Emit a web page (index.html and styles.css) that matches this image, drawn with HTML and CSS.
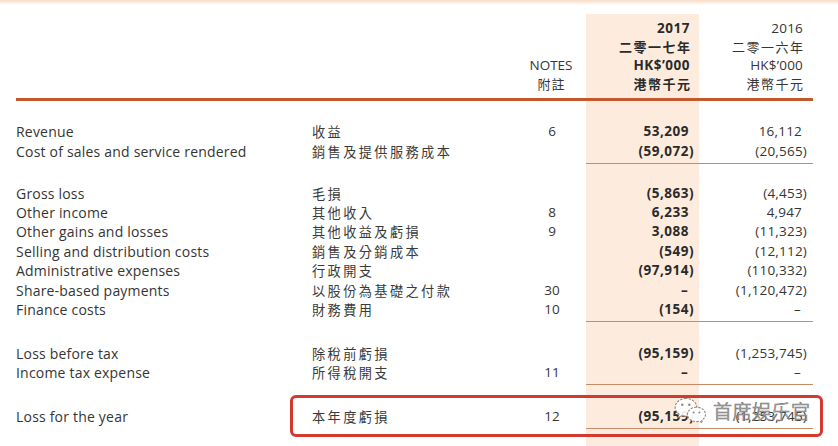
FILE: index.html
```html
<!DOCTYPE html>
<html lang="en">
<head>
<meta charset="utf-8">
<title>Consolidated statement of profit or loss</title>
<link rel="stylesheet" href="styles.css">
</head>
<body>
<div class="sheet">
  <div class="topband"></div>
  <div class="stmt">
    <div class="row head">
      <div class="en"></div>
      <div class="zh"></div>
      <div class="note">NOTES<br><span class="zhh">附註</span></div>
      <div class="sp"></div>
      <div class="cur">2017<br><span class="zhh">二零一七年</span><br>HK$’000<br><span class="zhh">港幣千元</span></div>
      <div class="prev">2016<br><span class="zhh">二零一六年</span><br>HK$’000<br><span class="zhh">港幣千元</span></div>
    </div>
    <div class="hrule"></div>

    <div class="row gap g21"><div></div><div></div><div></div><div></div><div class="cur"></div><div></div></div>

    <div class="row"><div class="en">Revenue</div><div class="zh">收益</div><div class="note">6</div><div class="sp"></div><div class="cur"><span class="pos">53,209</span></div><div class="prev"><span class="pos">16,112</span></div></div>
    <div class="row sum"><div class="en">Cost of sales and service rendered</div><div class="zh">銷售及提供服務成本</div><div class="note"></div><div class="sp"></div><div class="cur">(59,072)</div><div class="prev">(20,565)</div></div>

    <div class="row gap g20"><div></div><div></div><div></div><div></div><div class="cur"></div><div></div></div>

    <div class="row"><div class="en">Gross loss</div><div class="zh">毛損</div><div class="note"></div><div class="sp"></div><div class="cur">(5,863)</div><div class="prev">(4,453)</div></div>
    <div class="row"><div class="en">Other income</div><div class="zh">其他收入</div><div class="note">8</div><div class="sp"></div><div class="cur"><span class="pos">6,233</span></div><div class="prev"><span class="pos">4,947</span></div></div>
    <div class="row"><div class="en">Other gains and losses</div><div class="zh">其他收益及虧損</div><div class="note">9</div><div class="sp"></div><div class="cur"><span class="pos">3,088</span></div><div class="prev">(11,323)</div></div>
    <div class="row"><div class="en">Selling and distribution costs</div><div class="zh">銷售及分銷成本</div><div class="note"></div><div class="sp"></div><div class="cur">(549)</div><div class="prev">(12,112)</div></div>
    <div class="row"><div class="en">Administrative expenses</div><div class="zh">行政開支</div><div class="note"></div><div class="sp"></div><div class="cur">(97,914)</div><div class="prev">(110,332)</div></div>
    <div class="row"><div class="en">Share-based payments</div><div class="zh">以股份為基礎之付款</div><div class="note">30</div><div class="sp"></div><div class="cur"><span class="dash">–</span></div><div class="prev">(1,120,472)</div></div>
    <div class="row sum"><div class="en">Finance costs</div><div class="zh">財務費用</div><div class="note">10</div><div class="sp"></div><div class="cur">(154)</div><div class="prev"><span class="dash">–</span></div></div>

    <div class="row gap g22"><div></div><div></div><div></div><div></div><div class="cur"></div><div></div></div>

    <div class="row"><div class="en">Loss before tax</div><div class="zh">除稅前虧損</div><div class="note"></div><div class="sp"></div><div class="cur">(95,159)</div><div class="prev">(1,253,745)</div></div>
    <div class="row sum"><div class="en">Income tax expense</div><div class="zh">所得稅開支</div><div class="note">11</div><div class="sp"></div><div class="cur"><span class="dash">–</span></div><div class="prev"><span class="dash">–</span></div></div>

    <div class="row gap g22"><div></div><div></div><div></div><div></div><div class="cur"></div><div></div></div>

    <div class="row sum"><div class="en">Loss for the year</div><div class="zh">本年度虧損</div><div class="note">12</div><div class="sp"></div><div class="cur">(95,159)</div><div class="prev">(1,253,745)</div></div>

    <div class="row gap g20"><div></div><div></div><div></div><div></div><div class="cur"></div><div></div></div>
  </div>

  <div class="highlight"></div>
  <div class="watermark">
    <svg class="wx" width="34" height="28" viewBox="0 0 34 28" aria-hidden="true">
      <path d="M13 2.5C7 2.5 2.2 6.5 2.2 11.4c0 2.8 1.5 5.2 4 6.9l-1 3.3 3.8-2c1.3.4 2.6.6 4 .6 6 0 10.8-4 10.8-8.8S19 2.5 13 2.5z" fill="rgba(255,255,255,0.9)" stroke="#8a8a8a" stroke-width="1.1" stroke-dasharray="2.4 1.2"/>
      <path d="M23.5 11.2c-5 0-9 3.2-9 7.2s4 7.2 9 7.2c1 0 2-.1 2.9-.4l3.1 1.7-.8-2.7c2.3-1.3 3.8-3.4 3.8-5.8 0-4-4-7.2-9-7.2z" fill="rgba(255,255,255,0.95)" stroke="#8a8a8a" stroke-width="1.1" stroke-dasharray="2.4 1.2"/>
      <circle cx="9.3" cy="8.8" r="1.2" fill="#8a8a8a"/>
      <circle cx="16.3" cy="8.8" r="1.2" fill="#8a8a8a"/>
      <circle cx="20.6" cy="16.6" r="1" fill="#8a8a8a"/>
      <circle cx="26.4" cy="16.6" r="1" fill="#8a8a8a"/>
    </svg>
    <span class="wm-text">首席娱乐官</span>
  </div>
</div>
</body>
</html>
```
FILE: styles.css
```css
* { box-sizing: border-box; }

html, body {
  margin: 0;
  padding: 0;
  background: #ffffff;
}

.sheet {
  position: relative;
  width: 838px;
  height: 446px;
  overflow: hidden;
  font-family: "Open Sans", "Noto Sans CJK TC", sans-serif;
  font-size: 14px;
  color: #353535;
}

.topband {
  height: 5px;
  background: linear-gradient(#f8dcc6, rgba(255, 255, 255, 0));
}

.stmt {
  padding: 9px 0 0 16px;
}

.row {
  display: grid;
  grid-template-columns: 296px 208px 62px 4px 113px 114px;
  line-height: 19.4px;
  white-space: nowrap;
}

.en {
  letter-spacing: 0.2px;
}

.zh {
  font-family: "Noto Sans CJK TC", sans-serif;
  font-size: 13.2px;
  letter-spacing: 2.4px;
  color: #3a3a3a;
}

.note {
  text-align: center;
  padding-left: 2px;
  font-size: 13.5px;
}

.cur {
  background: #fdecdd;
  text-align: right;
  padding-right: 5px;
  font-weight: 700;
  font-size: 13.5px;
  color: #2a2a2a;
  letter-spacing: 0.5px;
}

.prev {
  text-align: right;
  padding-right: 6px;
  font-size: 13.5px;
  letter-spacing: 0.2px;
}

.pos,
.dash {
  padding-right: 5px;
}

.dash {
  display: inline-block;
  width: 14px;
  text-align: center;
}

.head {
  line-height: 18.7px;
}

.head > div {
  padding: 5px 0 4.3px;
}

.head .note {
  align-self: end;
}

.head .cur {
  padding-right: 9px;
}

.head .prev {
  padding-right: 10px;
}

.zhh {
  font-family: "Noto Sans CJK TC", sans-serif;
  font-size: 13px;
  letter-spacing: 1.5px;
  margin-right: -1.5px;
}

.head .note .zhh {
  letter-spacing: 1px;
  margin-right: -1px;
}

.hrule {
  width: 797px;
  height: 3px;
  background: #c1592c;
}

.gap { line-height: 0; }
.g20 { height: 20px; }
.g21 { height: 21px; }
.g22 { height: 22px; }

.sum > div {
  padding-bottom: 1.6px;
}

.sum .cur,
.sum .prev {
  border-bottom: 1px solid #c98b66;
}

.highlight {
  position: absolute;
  left: 290px;
  top: 395px;
  width: 533px;
  height: 42px;
  border: 3px solid #d2392f;
  border-radius: 6px;
}

.watermark {
  position: absolute;
  left: 673px;
  top: 396px;
  display: flex;
  align-items: center;
  gap: 6px;
}

.wx {
  display: block;
}

.wm-text {
  font-family: "Noto Sans CJK SC", sans-serif;
  font-size: 19px;
  font-weight: 300;
  letter-spacing: 0.5px;
  color: rgba(255, 255, 255, 0.6);
  -webkit-text-stroke: 0.7px #7a7a7a;
}
```
